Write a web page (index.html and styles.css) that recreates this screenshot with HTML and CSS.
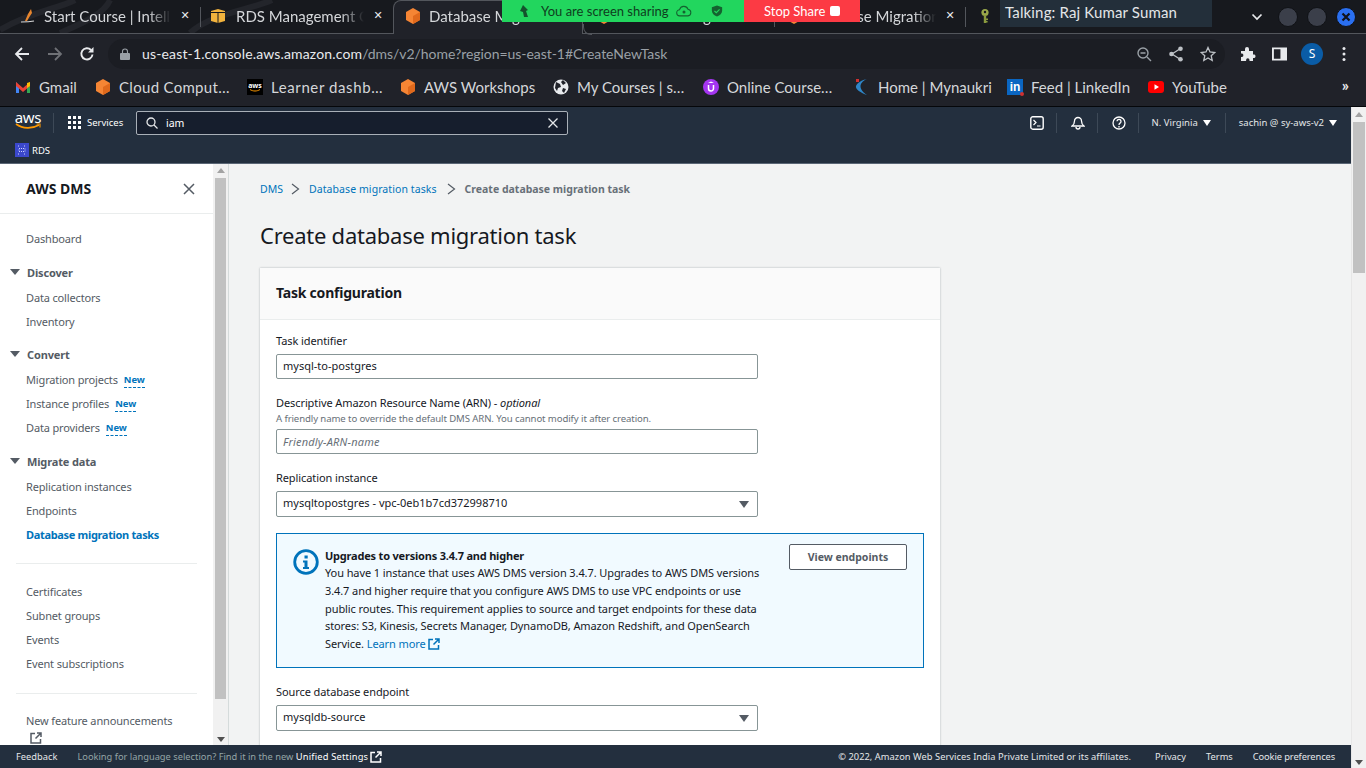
FILE: index.html
```html
<!DOCTYPE html>
<html lang="en">
<head>
<meta charset="utf-8">
<title>Create database migration task</title>
<link rel="stylesheet" href="styles.css">
</head>
<body>
<div class="tabs">
  <svg class="dragon" viewBox="0 0 400 33" width="400" height="33"><path d="M0 30C30 12 60 8 75 0M60 33C90 20 105 12 110 0M190 33C210 14 250 10 272 0" fill="none" stroke="#23252b" stroke-width="6"/></svg>
  <div class="tab t1">
    <svg class="fav" viewBox="0 0 16 16"><path d="M1 14c4 0 8 0 13-1" stroke="#d8d8d8" stroke-width="1.2" fill="none"/><path d="M11 1L8 6 5 13h2l3-5 2-3z" fill="#e8862e"/></svg>
    <span class="tab-title">Start Course | Intell</span><span class="tab-x">✕</span>
  </div>
  <div class="tab t2">
    <svg class="fav" viewBox="0 0 16 16"><path d="M1 3l7-2 7 2v10l-7 2-7-2z" fill="#f2b33d"/><path d="M1 4.500h14M8 4.500V15" stroke="#17191e" stroke-width="1"/></svg>
    <span class="tab-title">RDS Management C</span><span class="tab-x">✕</span>
  </div>
  <div class="tab t3 active">
    <svg class="fav" viewBox="0 0 16 16"><path d="M8 0l7 4v8l-7 4-7-4V4z" fill="#f58534"/><path d="M8 8l7-4v8l-7 4z" fill="#e0691c"/></svg>
    <span class="tab-title">Database Migration</span><span class="tab-x">✕</span>
  </div>
  <div class="tab t4">
    <svg class="fav" viewBox="0 0 16 16"><path d="M8 0l7 4v8l-7 4-7-4V4z" fill="#f58534"/></svg>
    <span class="tab-title">Database Migration</span><span class="tab-x">✕</span>
  </div>
  <div class="tab t5">
    <svg class="fav" viewBox="0 0 16 16"><path d="M8 0l7 4v8l-7 4-7-4V4z" fill="#f58534"/></svg>
    <span class="tab-title">Database Migration</span><span class="tab-x">✕</span>
  </div>
  <div class="tab t6">
    <svg class="fav" viewBox="0 0 16 16"><circle cx="8" cy="4.500" r="3.600" fill="#9aa84a"/><circle cx="8" cy="4" r="1.200" fill="#17191e"/><path d="M6.800 7h2.400v8H6.800zM9 10.500h2v1.400H9zM9 13h1.600v1.400H9z" fill="#8a9a3e"/></svg>
  </div>
  <div class="win">
    <svg class="win-chev" viewBox="0 0 12 8" width="12" height="8"><path d="M1.500 1.500L6 6l4.500-4.500" fill="none" stroke="#e8eaed" stroke-width="1.700"/></svg>
    <span class="win-btn"></span><span class="win-btn"></span>
    <span class="win-btn win-close"><svg viewBox="0 0 10 10" width="10" height="10"><path d="M1.500 1.500l7 7M8.500 1.500l-7 7" stroke="#10131a" stroke-width="2.200"/></svg></span>
  </div>
</div>

<div class="share">
  <svg class="share-pin" viewBox="0 0 14 14" width="14" height="14"><path d="M6 1l5 5-2 1 2 6H7L6 8 3 7z" fill="#14532d"/></svg>
  <span class="share-text">You are screen sharing</span>
  <svg class="share-cloud" viewBox="0 0 18 14" width="16" height="14"><path d="M4.500 12.500a3.500 3.500 0 0 1-.5-7A5 5 0 0 1 13.500 5a3.800 3.800 0 0 1 0 7.500z" fill="none" stroke="#14632f" stroke-width="1.200"/><circle cx="9" cy="8" r="1.700" fill="#14632f"/></svg>
  <svg class="share-shield" viewBox="0 0 14 14" width="12" height="14"><path d="M7 .5l6 2v4c0 3.500-2.500 6-6 7-3.500-1-6-3.500-6-7v-4z" fill="#14632f"/><path d="M4 7l2.200 2L10 5" fill="none" stroke="#22d65e" stroke-width="1.300"/></svg>
  <span class="stop">Stop Share <i class="stop-box"></i></span>
</div>
<div class="talking">Talking: Raj Kumar Suman</div>

<div class="toolbar">
  <svg class="tb-ic" viewBox="0 0 16 16"><path d="M15 8H2.500M8 2L2 8l6 6" fill="none" stroke="#e8eaed" stroke-width="1.800"/></svg>
  <svg class="tb-ic tb-fwd" viewBox="0 0 16 16"><path d="M1 8h12.500M8 2l6 6-6 6" fill="none" stroke="#6f7176" stroke-width="1.800"/></svg>
  <svg class="tb-ic" viewBox="0 0 16 16"><path d="M13.500 8.500A5.600 5.600 0 1 1 12 4" fill="none" stroke="#e8eaed" stroke-width="1.900"/><path d="M14.500 1v5.500H9z" fill="#e8eaed"/></svg>
  <div class="omni">
    <svg class="lock" viewBox="0 0 10 12" width="10" height="12"><path d="M2.500 5V3.500a2.500 2.500 0 0 1 5 0V5" fill="none" stroke="#9aa0a6" stroke-width="1.100"/><rect y="5" width="10" height="7" rx="1" fill="#9aa0a6"/></svg>
    <span class="url"><b>us-east-1.console.aws.amazon.com</b>/dms/v2/home?region=us-east-1#CreateNewTask</span>
    <span class="omni-end">
      <svg viewBox="0 0 16 16" width="16" height="16"><circle cx="7" cy="7" r="5" fill="none" stroke="#9aa0a6" stroke-width="1.400"/><path d="M4.500 7h5M11 11l4 4" stroke="#9aa0a6" stroke-width="1.400"/></svg>
      <svg viewBox="0 0 16 16" width="16" height="16"><path d="M12.500 2.500L4 8l8.500 5.500" fill="none" stroke="#bdc1c6" stroke-width="1.300"/><circle cx="12.500" cy="2.800" r="2.300" fill="#bdc1c6"/><circle cx="3.500" cy="8" r="2.300" fill="#bdc1c6"/><circle cx="12.500" cy="13.200" r="2.300" fill="#bdc1c6"/></svg>
      <svg viewBox="0 0 16 16" width="16" height="16"><path d="M8 1.500l2 4.500 4.800.5-3.600 3.200 1 4.800L8 12l-4.200 2.500 1-4.800L1.200 6.500 6 6z" fill="none" stroke="#bdc1c6" stroke-width="1.300"/></svg>
    </span>
  </div>
  <span class="tb-right">
    <svg viewBox="0 0 16 16" width="16" height="16"><path d="M1 5h4V3a2 2 0 0 1 4 0v2h4v3.500h1.500a2 2 0 0 1 0 3.500H13v3H9.500v-1a1.700 1.700 0 0 0-3.400 0v1H1v-4h1a1.800 1.800 0 0 0 0-3.500H1z" fill="#e8eaed"/></svg>
    <svg class="tb-panel" viewBox="0 0 16 14" width="15" height="14"><path d="M1 1h14v12H1z" fill="none" stroke="#e8eaed" stroke-width="2"/><rect x="9" y="1" width="6" height="12" fill="#e8eaed"/></svg>
    <span class="avatar">S</span>
    <svg viewBox="0 0 4 16" width="4" height="16"><circle cx="2" cy="2.500" r="1.500" fill="#e8eaed"/><circle cx="2" cy="8" r="1.500" fill="#e8eaed"/><circle cx="2" cy="13.500" r="1.500" fill="#e8eaed"/></svg>
  </span>
</div>

<div class="bookmarks">
  <a class="bm"><svg class="fav" viewBox="0 0 16 16"><path d="M1 3v11h3V7z" fill="#4285f4"/><path d="M15 3v11h-3V7z" fill="#34a853"/><path d="M1 3l7 6 7-6v4l-7 6-7-6z" fill="#ea4335"/><path d="M12 4l3-1v4l-3 2z" fill="#fbbc04"/></svg><span class="w40">Gmail</span></a>
  <a class="bm"><svg class="fav" viewBox="0 0 16 16"><path d="M8 0l7 4v8l-7 4-7-4V4z" fill="#f58534"/><path d="M8 8l7-4v8l-7 4z" fill="#e0691c"/></svg><span class="w112 wx">Cloud Comput…</span></a>
  <a class="bm"><span class="awsfav"><span class="awsfav-t">aws</span><svg viewBox="0 0 12 3" width="12" height="3"><path d="M1 .5c3 2 7 2 10 0" fill="none" stroke="#f90" stroke-width="1"/></svg></span><span class="w113 wx2">Learner dashb…</span></a>
  <a class="bm"><svg class="fav" viewBox="0 0 16 16"><path d="M8 0l7 4v8l-7 4-7-4V4z" fill="#f58534"/><path d="M8 8l7-4v8l-7 4z" fill="#e0691c"/></svg><span class="w113">AWS Workshops</span></a>
  <a class="bm"><svg class="fav" viewBox="0 0 16 16"><circle cx="8" cy="8" r="7.500" fill="#e8eaed"/><path d="M3 3l4 2 1 3-3 1-1 3-2-3zM10 1l3 3-3 2-2-3zM10 9l3 1-2 4-2-2z" fill="#202229"/></svg><span class="w110">My Courses | s…</span></a>
  <a class="bm"><svg class="fav" viewBox="0 0 16 16"><circle cx="8" cy="8" r="8" fill="#a435f0"/><path d="M5.500 6v3.500a2.500 2.500 0 0 0 5 0V6" fill="none" stroke="#fff" stroke-width="1.500"/><path d="M8 2.500l3 1.500H5z" fill="#fff"/></svg><span class="w111">Online Course…</span></a>
  <a class="bm"><svg class="fav" viewBox="0 0 16 16"><path d="M13 0C6 3 3 9 13 16 7 14 1 10 2 7c1-3 6-6 11-7z" fill="#2e86c8"/><rect x="2" y="0" width="3" height="3" fill="#d03030"/></svg><span class="w113">Home | Mynaukri</span></a>
  <a class="bm"><span class="in">in<i class="in-dot"></i></span><span class="w101">Feed | LinkedIn</span></a>
  <a class="bm"><svg class="fav" viewBox="0 0 16 16"><rect y="2" width="16" height="12" rx="3" fill="#f00"/><path d="M6.500 5.200v5.600L11 8z" fill="#fff"/></svg><span class="w60">YouTube</span></a>
  <span class="bm-more">»</span>
</div>

<div class="viewport">
  <div class="console">
    <header class="nav">
      <div class="nav-top">
        <span class="aws"><span class="aws-t">aws</span><svg viewBox="0 0 26 7" width="26" height="7"><path d="M1 1c7 5 16 5 23 1" fill="none" stroke="#f90" stroke-width="1.600"/><path d="M21.500 1H25v3.500" fill="none" stroke="#f90" stroke-width="1.100"/></svg></span>
        <span class="nav-sep"></span>
        <span class="services"><svg viewBox="0 0 13 13" width="13" height="13"><g fill="#fff"><rect width="3" height="3"/><rect x="5" width="3" height="3"/><rect x="10" width="3" height="3"/><rect y="5" width="3" height="3"/><rect x="5" y="5" width="3" height="3"/><rect x="10" y="5" width="3" height="3"/><rect y="10" width="3" height="3"/><rect x="5" y="10" width="3" height="3"/><rect x="10" y="10" width="3" height="3"/></g></svg>Services</span>
        <div class="search">
          <svg viewBox="0 0 12 12" width="12" height="12"><circle cx="5" cy="5" r="4" fill="none" stroke="#e5e7e9" stroke-width="1.300"/><path d="M8 8l3.500 3.500" stroke="#e5e7e9" stroke-width="1.300"/></svg>
          <span class="search-q">iam</span>
          <svg class="search-x" viewBox="0 0 10 10" width="10" height="10"><path d="M.5.5l9 9M9.500.5l-9 9" stroke="#e5e7e9" stroke-width="1.300"/></svg>
        </div>
        <div class="nav-right">
          <svg class="cell-ic" viewBox="0 0 14 14" width="14" height="14"><rect x=".8" y=".8" width="12.400" height="12.400" rx="2" fill="none" stroke="#fff" stroke-width="1.400"/><path d="M3.500 4L6 6.500 3.500 9M7 10h3.500" fill="none" stroke="#fff" stroke-width="1.200"/></svg>
          <span class="nav-sep"></span>
          <svg class="cell-ic" viewBox="0 0 14 14" width="14" height="14"><path d="M7 1.500A3.500 3.500 0 0 0 3.500 5c0 2.500-1 4-2.500 5h12c-1.500-1-2.500-2.500-2.500-5A3.500 3.500 0 0 0 7 1.500zM5 11a2 2 0 0 0 4 0" fill="none" stroke="#fff" stroke-width="1.300"/></svg>
          <span class="nav-sep"></span>
          <svg class="cell-ic" viewBox="0 0 14 14" width="14" height="14"><circle cx="7" cy="7" r="6" fill="none" stroke="#fff" stroke-width="1.300"/><path d="M5 5.300a2 2 0 1 1 3 1.800C7.300 7.500 7 8 7 9M7 10v1.500" fill="none" stroke="#fff" stroke-width="1.300"/></svg>
          <span class="nav-sep"></span>
          <span class="nav-item">N. Virginia<i class="tri"></i></span>
          <span class="nav-sep"></span>
          <span class="nav-item">sachin @ sy-aws-v2<i class="tri"></i></span>
        </div>
      </div>
      <div class="nav-bottom">
        <svg viewBox="0 0 14 14" width="14" height="14"><rect width="14" height="14" fill="#3b48cc"/><path d="M3 3h2M9 3h2M3 11h2M9 11h2M4 5.500h6v3H4z" fill="none" stroke="#cdd3ff" stroke-width="1" stroke-dasharray="1 1"/></svg>
        <span>RDS</span>
      </div>
    </header>

    <div class="work">
      <aside class="side">
        <div class="side-head"><span>AWS DMS</span><svg viewBox="0 0 12 12" width="12" height="12"><path d="M1 1l10 10M11 1L1 11" stroke="#545b64" stroke-width="1.500"/></svg></div>
        <nav class="side-nav">
          <a class="item">Dashboard</a>
          <div class="group"><i class="tri tri-dark"></i>Discover</div>
          <a class="item">Data collectors</a>
          <a class="item">Inventory</a>
          <div class="group group-tight"><i class="tri tri-dark"></i>Convert</div>
          <a class="item">Migration projects<span class="new">New</span></a>
          <a class="item">Instance profiles<span class="new">New</span></a>
          <a class="item">Data providers<span class="new">New</span></a>
          <div class="group"><i class="tri tri-dark"></i>Migrate data</div>
          <a class="item">Replication instances</a>
          <a class="item">Endpoints</a>
          <a class="item item-on">Database migration tasks</a>
          <hr class="div">
          <a class="item">Certificates</a>
          <a class="item">Subnet groups</a>
          <a class="item">Events</a>
          <a class="item">Event subscriptions</a>
          <hr class="div div-2">
          <a class="item item-wrap">New feature announcements
            <svg class="ext ext-side" viewBox="0 0 12 12" width="12" height="12"><path d="M5 1.500H1V11h9.500V7M7 1h4v4M11 1L5.500 6.500" fill="none" stroke="#545b64" stroke-width="1.500"/></svg></a>
        </nav>
      </aside>
      <div class="side-scroll"><i class="sb-up"></i><i class="sb-thumb"></i><i class="sb-down"></i></div>

      <main class="main">
        <div class="crumbs">
          <a>DMS</a>
          <svg viewBox="0 0 9 12" width="9" height="12"><path d="M1 1l6.500 5L1 11" fill="none" stroke="#545b64" stroke-width="1.200"/></svg>
          <a class="crumb-wide">Database migration tasks</a>
          <svg viewBox="0 0 9 12" width="9" height="12"><path d="M1 1l6.500 5L1 11" fill="none" stroke="#545b64" stroke-width="1.200"/></svg>
          <span>Create database migration task</span>
        </div>
        <h1>Create database migration task</h1>
        <section class="card">
          <h2>Task configuration</h2>
          <div class="card-body">
            <label class="lab">Task identifier</label>
            <div class="field">mysql-to-postgres</div>
            <label class="lab lab-arn">Descriptive Amazon Resource Name (ARN) - <em>optional</em></label>
            <div class="hint">A friendly name to override the default DMS ARN. You cannot modify it after creation.</div>
            <div class="field field-ph">Friendly-ARN-name</div>
            <label class="lab lab-rep">Replication instance</label>
            <div class="field field-sel">mysqltopostgres - vpc-0eb1b7cd372998710<i class="tri tri-sel"></i></div>
            <div class="alert">
              <svg class="alert-ic" viewBox="0 0 26 26" width="26" height="26"><circle cx="13" cy="13" r="11.300" fill="none" stroke="#0073bb" stroke-width="2.800"/><rect x="11.500" y="6.500" width="3.200" height="3" fill="#0073bb"/><path d="M10 11.500h4.500V18H16v2h-6v-2h1.500v-4.500H10z" fill="#0073bb"/></svg>
              <div class="alert-text">
                <strong>Upgrades to versions 3.4.7 and higher</strong>
                You have 1 instance that uses AWS DMS version 3.4.7. Upgrades to AWS DMS versions<br>
                3.4.7 and higher require that you configure AWS DMS to use VPC endpoints or use<br>
                public routes. This requirement applies to source and target endpoints for these data<br>
                stores: S3, Kinesis, Secrets Manager, DynamoDB, Amazon Redshift, and OpenSearch<br>
                Service. <a class="link">Learn more <svg class="ext" viewBox="0 0 12 12" width="12" height="12"><path d="M5 1.500H1V11h9.500V7M7 1h4v4M11 1L5.500 6.500" fill="none" stroke="#0073bb" stroke-width="1.500"/></svg></a>
              </div>
              <button class="btn">View endpoints</button>
            </div>
            <label class="lab lab-src">Source database endpoint</label>
            <div class="field field-sel">mysqldb-source<i class="tri tri-sel"></i></div>
          </div>
        </section>
      </main>
    </div>

    <footer class="foot">
      <a class="foot-fb">Feedback</a>
      <span class="foot-lang">Looking for language selection? Find it in the new <b>Unified Settings</b><svg class="ext" viewBox="0 0 12 12" width="12" height="12"><path d="M5 1.500H1V11h9.500V7M7 1h4v4M11 1L5.500 6.500" fill="none" stroke="#fff" stroke-width="1.500"/></svg></span>
      <span class="foot-right"><span class="foot-copy">© 2022, Amazon Web Services India Private Limited or its affiliates.</span><a>Privacy</a><a>Terms</a><a class="foot-cookie">Cookie preferences</a></span>
    </footer>
  </div>
  <div class="page-scroll"><i class="sb-up"></i><i class="ps-thumb"></i><i class="sb-down"></i></div>
</div>
</body>
</html>
```
FILE: styles.css
```css
* { box-sizing: border-box; }
html, body { margin: 0; height: 100%; }
body { width: 1366px; height: 768px; overflow: hidden; display: flex; flex-direction: column; background: #202229; font-family: "Noto Sans", sans-serif; position: relative; }
i { font-style: normal; display: block; }
.fav { width: 16px; height: 16px; flex: none; }

/* tab strip */
.tabs { height: 34px; flex: none; background: #17191e; border-bottom: 1px solid #53565c; display: flex; position: relative; color: #d5d7da; font-family: Lato, sans-serif; font-size: 15px; }
.dragon { position: absolute; left: 0; top: 0; }
.tab { height: 33px; display: flex; align-items: center; position: relative; flex: none; padding-bottom: 2px; }
.tab + .tab::before { content: ""; position: absolute; left: 0; top: 7px; height: 20px; width: 1px; background: #53565c; }
.tab.active::before, .tab.active + .tab::before { display: none; }
.t1 { width: 200px; padding-left: 20px; }
.t2 { width: 193px; padding-left: 10px; }
.t3 { width: 190px; padding-left: 11px; background: #202229; border-radius: 8px 8px 0 0; border: 1px solid #53565c; border-bottom: 0; height: 34px; padding-bottom: 3px; }
.t4 { width: 191px; padding-left: 13px; }
.t4::after { content: ""; position: absolute; left: 0; top: 24px; width: 8px; height: 10px; border-left: 1px solid #53565c; border-bottom: 1px solid #53565c; border-radius: 0 0 0 8px; }
.t5 { width: 191px; padding-left: 12px; }
.t6 { width: 40px; padding-left: 12px; }
.tab-title { margin-left: 8px; flex: 1; min-width: 0; overflow: hidden; white-space: nowrap; -webkit-mask-image: linear-gradient(90deg, #000 82%, transparent); mask-image: linear-gradient(90deg, #000 82%, transparent); }
.t2 .tab-title { margin-left: 10px; }
.tab-x { width: 16px; flex: none; margin: 0 7px 0 6px; font-size: 11px; color: #e8eaed; font-weight: 700; font-family: "DejaVu Sans", sans-serif; text-align: center; }
.win { margin-left: auto; display: flex; align-items: center; padding-right: 10px; gap: 9px; }
.win-chev { margin-right: 6px; }
.win-btn { width: 20px; height: 20px; border-radius: 50%; background: #3b3f4a; border: 1px solid #101216; display: flex; align-items: center; justify-content: center; }
.win-close { background: #2a6ff0; }

/* overlays */
.share { position: absolute; left: 502px; top: 0; height: 22px; width: 358px; background: #22d65e; display: flex; align-items: center; color: #0f3d20; font-family: Lato, sans-serif; font-size: 13px; }
.share-pin { margin-left: 15px; }
.share-text { margin-left: 10px; width: 127px; white-space: nowrap; }
.share-cloud { margin-left: 8px; }
.share-shield { margin-left: 19px; }
.stop { margin-left: auto; width: 116px; height: 22px; background: #fc3a44; color: #fff; display: flex; align-items: center; padding-left: 20px; gap: 5px; white-space: nowrap; }
.stop-box { width: 10px; height: 10px; background: #fff; border-radius: 2px; }
.talking { position: absolute; left: 1000px; top: 0; width: 212px; height: 27px; background: #232f3a; color: #e3e6e8; font-family: Lato, sans-serif; font-size: 15px; padding: 3px 0 0 5px; letter-spacing: .15px; }

/* toolbar */
.toolbar { height: 38px; flex: none; display: flex; align-items: center; padding: 1px 8px 0 14px; color: #e8eaed; background: #202229; }
.tb-ic { width: 16px; height: 16px; flex: none; margin-right: 17px; }
.tb-fwd { margin-right: 16px; }
.omni { flex: none; width: 1117px; margin-left: -4px; height: 30px; border-radius: 15px; background: #1b1d23; display: flex; align-items: center; padding-left: 12px; font-family: Lato, sans-serif; font-size: 14px; }
.lock { flex: none; }
.url { margin-left: 12px; color: #9aa0a6; white-space: nowrap; letter-spacing: -.05px; }
.url b { font-weight: 400; color: #e8eaed; letter-spacing: .15px; }
.omni-end { margin-left: auto; display: flex; gap: 16px; padding-right: 9px; align-items: center; }
.tb-right { margin-left: 15px; display: flex; align-items: center; gap: 16px; }
.tb-panel { margin-right: -2px; }
.avatar { width: 22px; height: 22px; border-radius: 50%; background: #0a5ca6; color: #fff; display: flex; align-items: center; justify-content: center; font-size: 12px; margin-right: 3px; }

/* bookmarks */
.bookmarks { height: 35px; flex: none; display: flex; align-items: center; padding: 0 0 4px 15px; gap: 16px; background: #202229; color: #d5d7da; font-family: Lato, sans-serif; font-size: 15px; border-bottom: 1px solid #05070a; position: relative; }
.bm { display: flex; align-items: center; gap: 8px; white-space: nowrap; flex: none; }
.w40 { width: 40px; } .w60 { width: 60px; } .w101 { width: 101px; } .w110 { width: 110px; } .w111 { width: 111px; } .w112 { width: 112px; } .w113 { width: 113px; }
.wx { letter-spacing: .3px; }
.wx2 { letter-spacing: .6px; }
.awsfav { width: 16px; height: 16px; background: #000; display: flex; flex-direction: column; align-items: center; justify-content: center; line-height: 1; flex: none; }
.awsfav-t { color: #fff; font: 700 7px/7px "Noto Sans", sans-serif; }
.in { width: 16px; height: 16px; flex: none; background: #0a66c2; color: #fff; font: 700 12px/16px "Liberation Sans", sans-serif; text-align: center; position: relative; }
.in-dot { position: absolute; right: -1px; bottom: -1px; width: 4px; height: 4px; background: #d03030; border-radius: 50%; }
.bm-more { position: absolute; right: 17px; top: 3px; color: #e8eaed; font-size: 16px; font-weight: 700; }

/* console viewport */
.viewport { flex: 1; min-height: 0; display: flex; }
.console { flex: 1; min-width: 0; display: flex; flex-direction: column; font-family: "Noto Sans", sans-serif; }
.page-scroll { width: 15px; flex: none; background: #f1f1f1; display: flex; flex-direction: column; align-items: center; padding-top: 5px; border-left: 1px solid #e7e7e7; }
.sb-up { width: 0; height: 0; border: 4px solid transparent; border-top: 0; border-bottom: 5px solid #a3a3a3; }
.sb-down { width: 0; height: 0; border: 4px solid transparent; border-bottom: 0; border-top: 5px solid #505050; margin-top: auto; margin-bottom: 3px; }
.ps-thumb { width: 12px; height: 151px; background: #c1c1c1; margin-top: 5px; }

/* AWS nav */
.nav { height: 57px; flex: none; background: #232f3e; border-bottom: 1px solid #5a6675; color: #fff; font-size: 9.5px; }
.nav-top { height: 31px; display: flex; align-items: center; padding: 0 0 0 15px; }
.aws { width: 26px; display: flex; flex-direction: column; align-items: center; }
.aws-t { font: 400 15px/11px "Noto Sans", sans-serif; letter-spacing: -.3px; margin-top: -3px; }
.nav-sep { width: 1px; height: 20px; background: #3d4957; flex: none; }
.nav-top > .nav-sep { margin: 0 14px 0 12px; }
.services { display: flex; align-items: center; gap: 6px; white-space: nowrap; width: 68px; }
.search { width: 432px; height: 24px; border: 1px solid #a9b0b8; border-radius: 2px; background: #161e2d; display: flex; align-items: center; padding: 0 9px 0 9px; font-size: 10.5px; gap: 8px; }
.search-x { margin-left: auto; }
.nav-right { margin-left: auto; display: flex; align-items: center; }
.cell-ic { margin: 0 12px 0 14px; }
.cell-ic:first-child { margin-left: 0; }
.nav-item { display: flex; align-items: center; gap: 5px; padding: 0 14px 0 13px; white-space: nowrap; color: #e5e7e9; font-size: 9.5px; }
.tri { width: 0; height: 0; border-left: 4px solid transparent; border-right: 4px solid transparent; border-top: 6px solid #fff; flex: none; }
.nav-bottom { height: 25px; display: flex; align-items: center; gap: 3px; padding: 0 0 1px 15px; }

/* work area */
.work { flex: 1; min-height: 0; display: flex; }
.side { width: 213px; flex: none; background: #fff; display: flex; flex-direction: column; overflow: hidden; color: #545b64; }
.side-head { height: 50px; flex: none; padding: 0 18px 0 26px; display: flex; align-items: center; justify-content: space-between; border-bottom: 1px solid #eaeded; font-size: 14px; font-weight: 700; color: #16191f; }
.side-nav { display: flex; flex-direction: column; padding-top: 12px; font-size: 11px; letter-spacing: -.15px; }
.item { height: 24px; display: flex; align-items: center; padding-left: 26px; white-space: nowrap; flex: none; }
.item-on { color: #0073bb; font-weight: 700; letter-spacing: -.33px; }
.item-wrap { display: block; height: auto; line-height: 16px; padding-top: 4px; }
.group { height: 24px; margin-top: 10px; margin-bottom: 1px; display: flex; align-items: center; font-weight: 700; padding-left: 10px; flex: none; }
.group-tight { margin-top: 9px; }
.tri-dark { border-top-color: #545b64; margin-right: 7px; border-left-width: 5px; border-right-width: 5px; }
.new { margin: 2px 0 0 6px; color: #0073bb; font-weight: 700; font-size: 9.4px; border-bottom: 1px dashed #0073bb; line-height: 14px; letter-spacing: 0; }
.div { border: 0; height: 1px; width: 181px; background: #eaeded; margin: 17px 0 15px 16px; flex: none; }
.div-2 { margin-top: 18px; }
.ext { vertical-align: -2px; }
.ext-side { display: block; margin: 3px 0 0 4px; }
.side-scroll { width: 16px; flex: none; background: #f1f1f1; border-right: 1px solid #d5dbdb; display: flex; flex-direction: column; align-items: center; padding-top: 4px; }
.sb-thumb { width: 11px; height: 521px; background: #c1c1c1; margin-top: 5px; flex: none; }

/* main */
.main { flex: 1; min-width: 0; background: #f2f3f3; overflow: hidden; padding: 16px 0 0 31px; }
.crumbs { display: flex; align-items: center; height: 18px; font-size: 10.5px; color: #0073bb; gap: 8px; white-space: nowrap; }
.crumb-wide { letter-spacing: .08px; margin: 0 2px 0 1px; }
.crumbs span { color: #687078; font-weight: 700; margin-left: 1px; }
h1 { margin: 22px 0 0; font-size: 22px; line-height: 30px; font-weight: 400; color: #16191f; letter-spacing: -.25px; }
.card { width: 680px; margin-top: 18px; background: #fff; box-shadow: 0 0 2px rgba(0,28,36,.3); }
h2 { margin: 0; height: 52px; padding: 0 16px 2px; display: flex; align-items: center; font-size: 14px; font-weight: 700; color: #16191f; background: #fafafa; border-bottom: 1px solid #eaeded; letter-spacing: -.22px; }
.card-body { padding: 13px 16px 30px; font-size: 11px; color: #16191f; }
.lab { display: block; line-height: 16px; height: 16px; letter-spacing: -.09px; }
.lab-arn { margin-top: 16px; }
.lab-rep { margin-top: 16px; }
.lab-src { margin-top: 16px; }
.field { width: 482px; height: 25px; margin-top: 5px; border: 1px solid #879596; border-radius: 2px; background: #fff; padding: 0 7px 2px 6px; display: flex; align-items: center; position: relative; }
.hint { font-size: 9.6px; color: #687078; line-height: 14px; margin-top: 1px; letter-spacing: -.1px; }
.hint + .field { margin-top: 3px; }
.field-ph { color: #687078; font-style: italic; letter-spacing: .18px; padding-bottom: 0; }
.field-sel { height: 26px; margin-top: 5px; padding-bottom: 4px; }
.tri-sel { margin: 4px 1px 0 auto; border-top: 7px solid #545b64; border-left-width: 5px; border-right-width: 5px; }
.alert { width: 648px; height: 135px; margin-top: 16px; background: #f1faff; border: 1px solid #0073bb; display: flex; padding: 10px 16px 0 16px; }
.alert-ic { flex: none; margin: 5px 6px 0 0; }
.alert-text { flex: 1; min-width: 0; padding-top: 4px; line-height: 17.8px; white-space: nowrap; letter-spacing: -.09px; }
.alert-text strong { display: block; height: 16px; font-weight: 700; line-height: 16px; letter-spacing: -.2px; }
.link { color: #0073bb; }
.btn { flex: none; width: 118px; height: 26px; border: 1px solid #545b64; border-radius: 2px; background: #fff; color: #545b64; font: 700 10.5px "Noto Sans", sans-serif; padding: 0; }

/* footer */
.foot { height: 23px; flex: none; background: #232f3e; display: flex; align-items: center; padding: 0 16px; color: #e5e7e9; font-size: 9.3px; white-space: nowrap; }
.foot-lang { margin-left: 20px; color: #95a5a6; display: flex; align-items: center; white-space: pre; }
.foot-lang b { font-weight: 400; color: #fff; letter-spacing: .2px; }
.foot-lang .ext { margin-left: 2px; }
.foot-right { margin-left: auto; display: flex; gap: 20px; }
.foot-copy { margin-right: 4px; letter-spacing: .03px; }
.foot-cookie { letter-spacing: -.1px; }
```
